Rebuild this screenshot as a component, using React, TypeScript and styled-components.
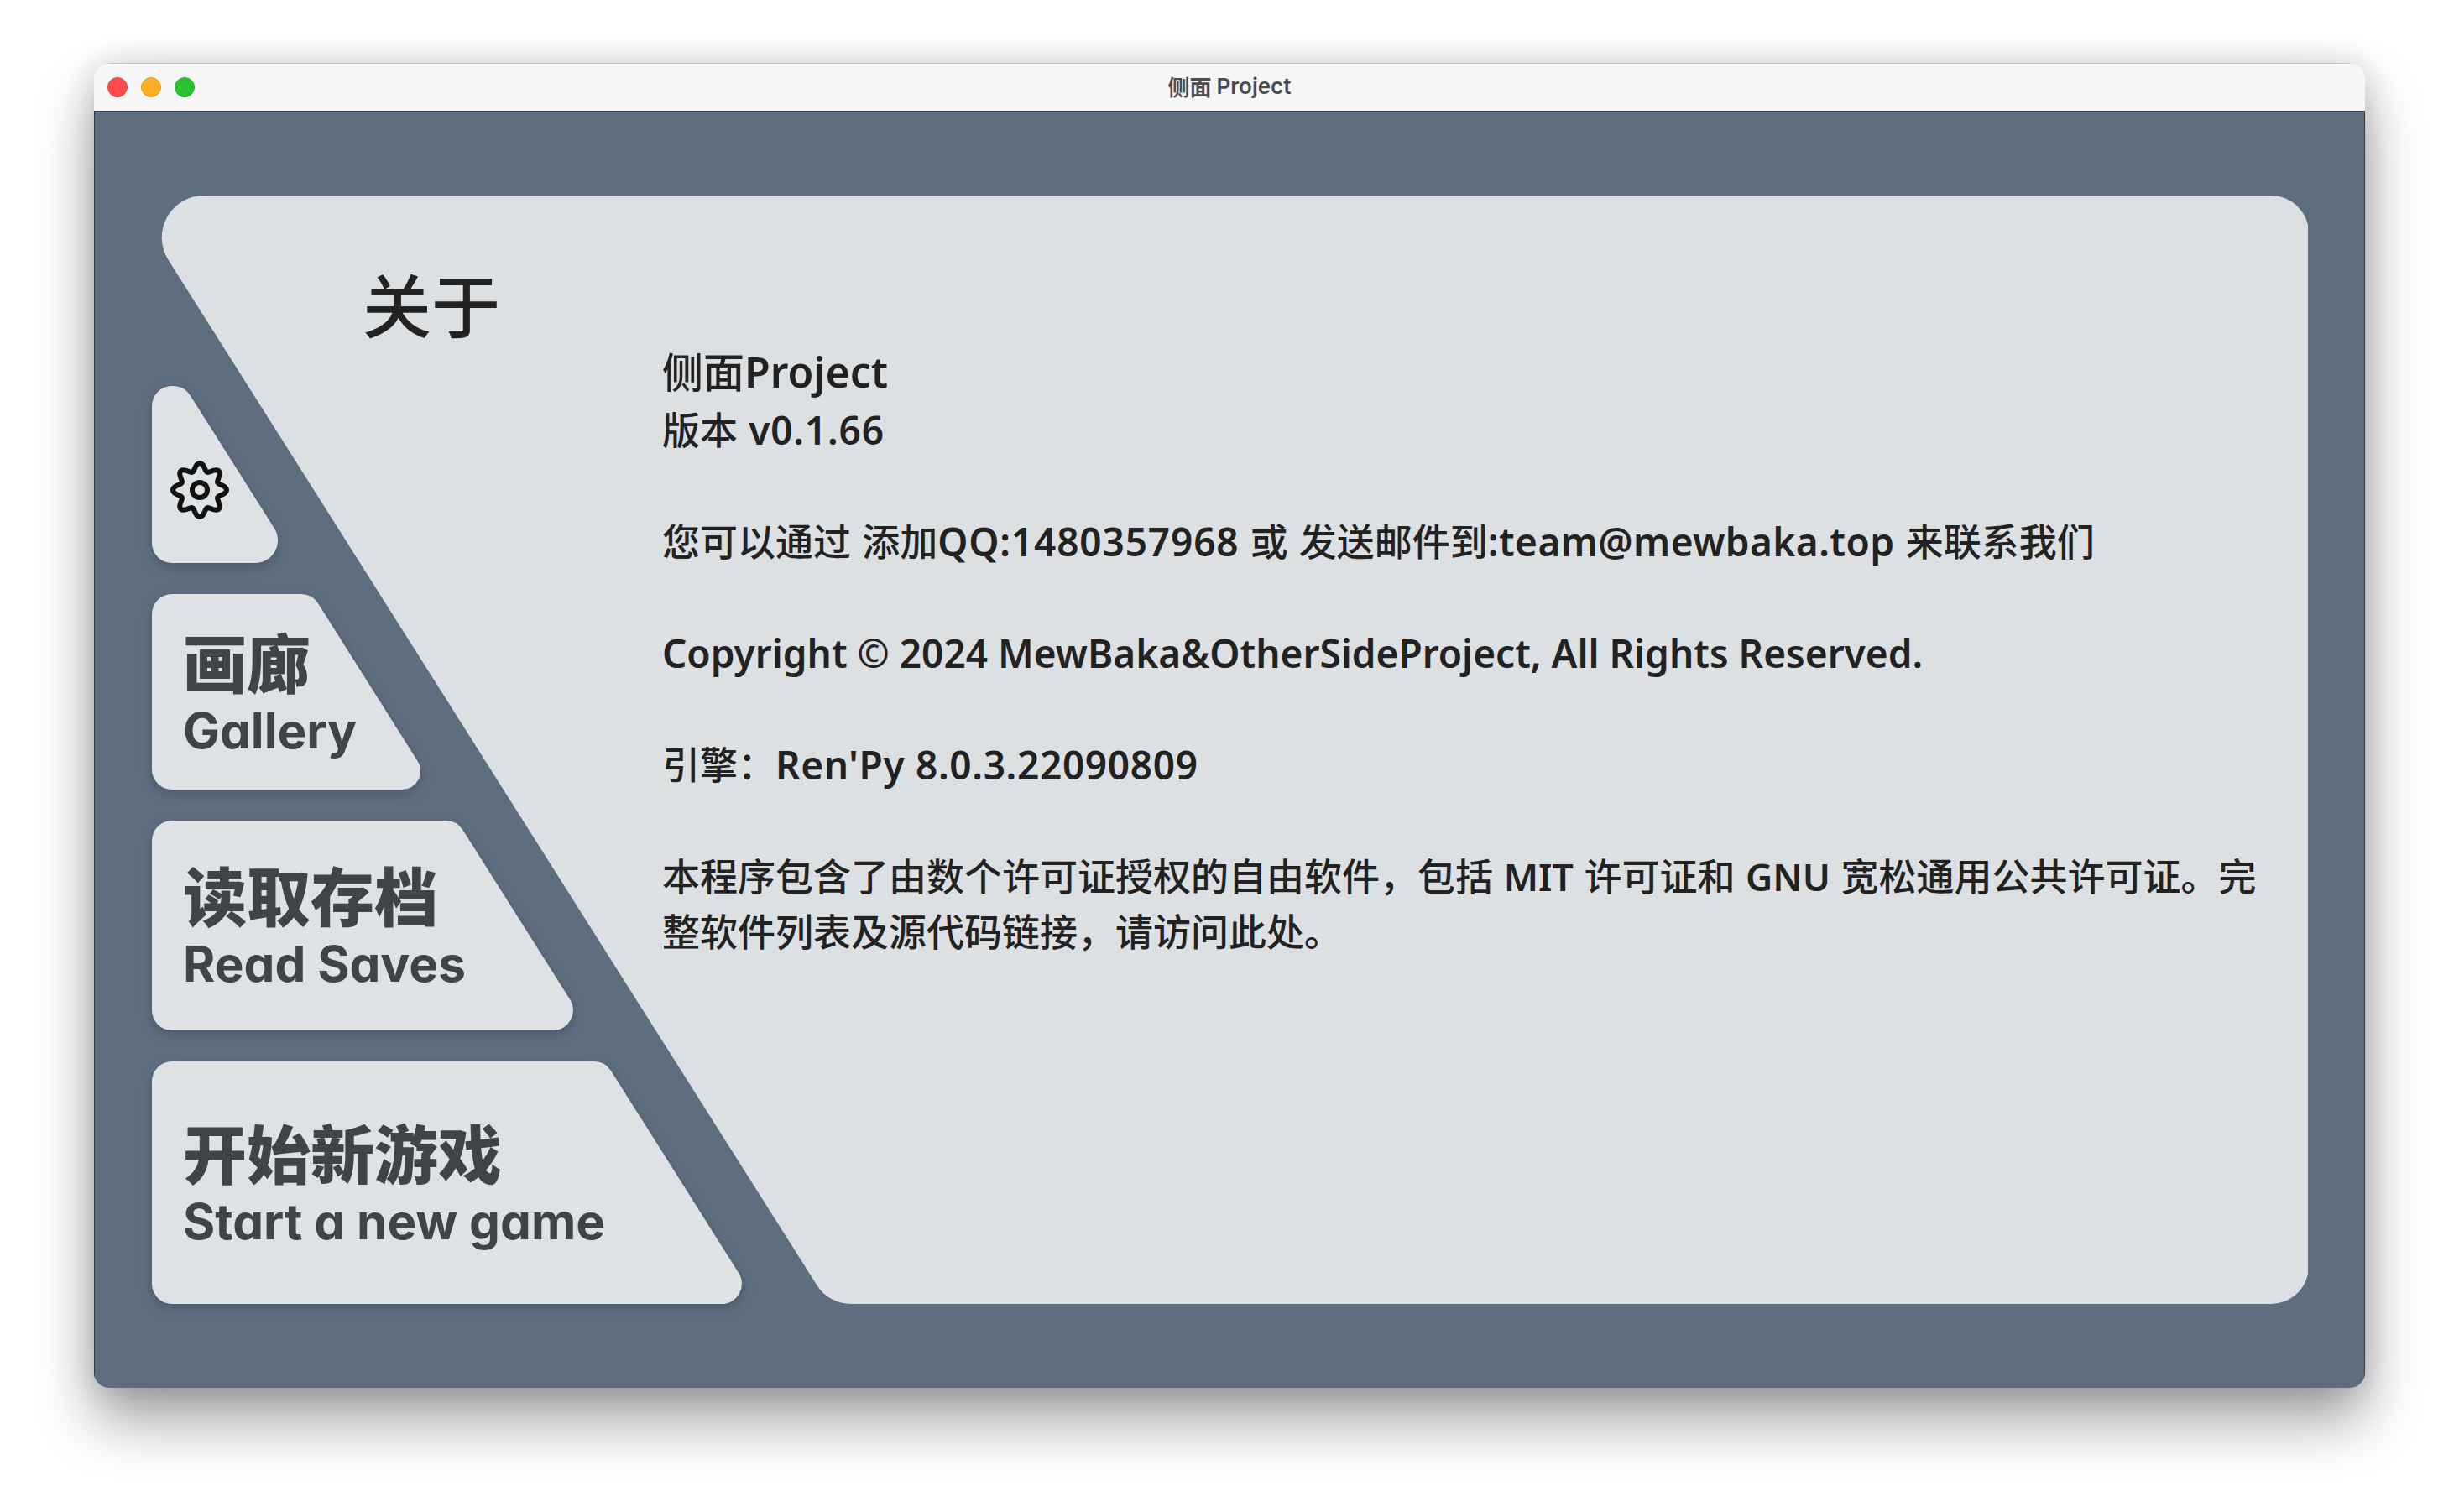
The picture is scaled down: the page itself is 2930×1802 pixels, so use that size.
import styled, { createGlobalStyle } from "styled-components";

type Point = [number, number];

// polygon with true circular corners, radius per vertex
const roundedPath = (points: Point[], radii: number[]) => {
    let d = "";
    points.forEach((p, i) => {
        const prev = points[(i + points.length - 1) % points.length];
        const next = points[(i + 1) % points.length];
        const ax = prev[0] - p[0];
        const ay = prev[1] - p[1];
        const bx = next[0] - p[0];
        const by = next[1] - p[1];
        const la = Math.hypot(ax, ay);
        const lb = Math.hypot(bx, by);
        const angle = Math.acos((ax * bx + ay * by) / (la * lb));
        const t = radii[i] / Math.tan(angle / 2);
        const x1 = p[0] + (ax / la) * t;
        const y1 = p[1] + (ay / la) * t;
        const x2 = p[0] + (bx / lb) * t;
        const y2 = p[1] + (by / lb) * t;
        d += `${i === 0 ? "M" : "L"}${x1.toFixed(2)} ${y1.toFixed(2)} `;
        d += `A${radii[i]} ${radii[i]} 0 0 1 ${x2.toFixed(2)} ${y2.toFixed(2)} `;
    });
    return d + "Z";
};

const PANEL_SHAPE = roundedPath(
    [
        [-29, 0],
        [2570, 0],
        [2570, 1321],
        [806.5, 1321],
    ],
    [50, 45, 45, 48],
);

const BUTTONS = {
    gear: roundedPath(
        [
            [0, 0],
            [38.6, 0],
            [172, 211],
            [0, 211],
        ],
        [24, 24, 27, 24],
    ),
    gallery: roundedPath(
        [
            [0, 0],
            [191, 0],
            [338, 233],
            [0, 233],
        ],
        [24, 24, 22, 24],
    ),
    read: roundedPath(
        [
            [0, 0],
            [363.5, 0],
            [521.5, 250],
            [0, 250],
        ],
        [24, 24, 24, 24],
    ),
    game: roundedPath(
        [
            [0, 0],
            [540, 0],
            [722.5, 289],
            [0, 289],
        ],
        [24, 24, 24, 24],
    ),
};

const cogPath = () => {
    let d = "";
    for (let i = 0; i <= 240; i++) {
        const a = (i / 240) * Math.PI * 2;
        const r = 27.5 + 4.5 * Math.cos(8 * a);
        const x = 40 + r * Math.cos(a);
        const y = 40 + r * Math.sin(a);
        d += `${i === 0 ? "M" : "L"}${x.toFixed(2)} ${y.toFixed(2)} `;
    }
    return d + "Z";
};

const GlobalStyle = createGlobalStyle`
    html, body {
        margin: 0;
        background: #ffffff;
    }
    body {
        font-family: "Noto Sans", "Noto Sans CJK SC", sans-serif;
    }
`;

const Page = styled.div`
    width: 2930px;
    height: 1802px;
    padding: 75px 112px 148px;
    box-sizing: border-box;
    overflow: hidden;
`;

const Window = styled.div`
    height: 100%;
    display: flex;
    flex-direction: column;
    border-radius: 20px 20px 18px 18px;
    overflow: hidden;
    box-shadow:
        0 38px 70px rgba(0, 0, 0, 0.38),
        0 0 36px rgba(0, 0, 0, 0.14);
`;

const TitleBar = styled.div`
    position: relative;
    flex: none;
    height: 58px;
    box-sizing: border-box;
    padding-bottom: 3px;
    display: flex;
    align-items: center;
    justify-content: center;
    gap: 6px;
    background: #f6f6f6;
    border-top: 1px solid #c8c8c8;
    border-bottom: 1px solid #2f3b48;
    color: #4c4c4c;
    font-family: "Inter", "Noto Sans CJK SC", sans-serif;
    font-size: 26px;
    font-weight: 600;
`;

const Lights = styled.div`
    position: absolute;
    left: 16px;
    top: 16px;
    display: flex;
    gap: 16px;
`;

const Light = styled.span<{ $fill: string; $edge: string }>`
    width: 24px;
    height: 24px;
    box-sizing: border-box;
    border-radius: 50%;
    background: ${(p) => p.$fill};
    border: 1px solid ${(p) => p.$edge};
`;

const Body = styled.div`
    flex: 1;
    display: grid;
    padding: 100px 67px 100px 69px;
    background: #5f6e7f;
    border-left: 1px solid #2f3b48;
    border-right: 1px solid #2f3b48;
`;

const Panel = styled.div`
    grid-area: 1 / 1;
    margin-left: -1px;
    background: #dde0e3;
    clip-path: path("${PANEL_SHAPE}");
    color: #222222;
`;

const Heading = styled.h1`
    margin: 78px 0 0 251px;
    font-family: "Noto Sans CJK SC", sans-serif;
    font-size: 82px;
    line-height: 100px;
    font-weight: 500;
`;

const About = styled.div`
    margin: 1px 0 0 608px;
    width: 1920px;
    font-family: "Noto Sans CJK SC", sans-serif;
    font-size: 45px;
    line-height: 66.4px;
    font-weight: 500;
    word-spacing: 3px;
    p {
        margin: 0 0 66.4px;
    }
`;

const ProjectName = styled.div`
    margin-top: -8.4px;
    font-size: 49px;
    line-height: 74.8px;
`;

const Notice = styled.p`
    word-spacing: 2.5px;
`;

const Latin = styled.span<{ $track?: number; $size?: number }>`
    font-family: "Noto Sans", sans-serif;
    font-size: ${(p) => p.$size ?? 46}px;
    line-height: 1;
    font-weight: 600;
    word-spacing: 0;
    letter-spacing: ${(p) => p.$track ?? 0}px;
`;

const Sidebar = styled.nav`
    grid-area: 1 / 1;
    z-index: 1;
    justify-self: start;
    align-self: end;
    display: flex;
    flex-direction: column;
    gap: 37px;
    margin-left: -1px;
`;

const Shadow = styled.div`
    filter: drop-shadow(0 5px 7px rgba(30, 40, 55, 0.3));
`;

const NavButton = styled.div<{ $w: number; $h: number; $shape: string }>`
    width: ${(p) => p.$w}px;
    height: ${(p) => p.$h}px;
    box-sizing: border-box;
    padding: 4px 0 0 37px;
    display: flex;
    flex-direction: column;
    justify-content: center;
    background: #dfe2e5;
    clip-path: path("${(p) => p.$shape}");
    color: #404347;
`;

const GearButton = styled(NavButton)`
    padding: 84px 0 0 17px;
    display: block;
    svg {
        display: block;
    }
`;

const NavTitle = styled.div`
    font-family: "Noto Sans CJK SC", sans-serif;
    font-weight: 900;
    font-size: 76px;
    line-height: 88px;
    white-space: nowrap;
`;

const NavSub = styled.div`
    font-family: "Inter", sans-serif;
    font-feature-settings: "cv11";
    font-weight: 700;
    font-size: 58.5px;
    line-height: 80px;
    white-space: nowrap;
`;

export default function App() {
    return (
        <Page>
            <GlobalStyle />
            <Window>
                <TitleBar>
                    <Lights>
                        <Light $fill="#fe4b4b" $edge="#e8403f" />
                        <Light $fill="#feb024" $edge="#e09a1c" />
                        <Light $fill="#28c231" $edge="#22ab2a" />
                    </Lights>
                    <span>侧面</span>
                    <span>Project</span>
                </TitleBar>
                <Body>
                    <Panel>
                        <Heading>关于</Heading>
                        <About>
                            <ProjectName>
                                侧面<Latin $size={50}>Project</Latin>
                            </ProjectName>
                            <p>
                                版本 <Latin $track={0.85}>v0.1.66</Latin>
                            </p>
                            <p>
                                您可以通过 添加<Latin $track={0.86}>QQ:1480357968</Latin> 或 发送邮件到<Latin $track={0.44}>:team@mewbaka.top</Latin> 来联系我们
                            </p>
                            <p>
                                <Latin>Copyright © 2024 MewBaka&amp;OtherSideProject, All Rights Reserved.</Latin>
                            </p>
                            <p>
                                引擎：<Latin $track={0.66}>Ren'Py 8.0.3.22090809</Latin>
                            </p>
                            <Notice>
                                本程序包含了由数个许可证授权的自由软件，包括 <Latin $size={44.5}>MIT</Latin> 许可证和 <Latin $size={44.5}>GNU</Latin> 宽松通用公共许可证。完整软件列表及源代码链接，请访问此处。
                            </Notice>
                        </About>
                    </Panel>
                    <Sidebar>
                        <Shadow>
                            <GearButton $w={150} $h={211} $shape={BUTTONS.gear}>
                                <svg width="80" height="80" viewBox="0 0 80 80" fill="none" stroke="#111111" strokeWidth="6">
                                    <path d={cogPath()} strokeLinejoin="round" />
                                    <circle cx="40" cy="40" r="9" />
                                </svg>
                            </GearButton>
                        </Shadow>
                        <Shadow>
                            <NavButton $w={320} $h={233} $shape={BUTTONS.gallery}>
                                <NavTitle>画廊</NavTitle>
                                <NavSub>Gallery</NavSub>
                            </NavButton>
                        </Shadow>
                        <Shadow>
                            <NavButton $w={502} $h={250} $shape={BUTTONS.read}>
                                <NavTitle>读取存档</NavTitle>
                                <NavSub>Read Saves</NavSub>
                            </NavButton>
                        </Shadow>
                        <Shadow>
                            <NavButton $w={703} $h={289} $shape={BUTTONS.game}>
                                <NavTitle>开始新游戏</NavTitle>
                                <NavSub>Start a new game</NavSub>
                            </NavButton>
                        </Shadow>
                    </Sidebar>
                </Body>
            </Window>
        </Page>
    );
}
